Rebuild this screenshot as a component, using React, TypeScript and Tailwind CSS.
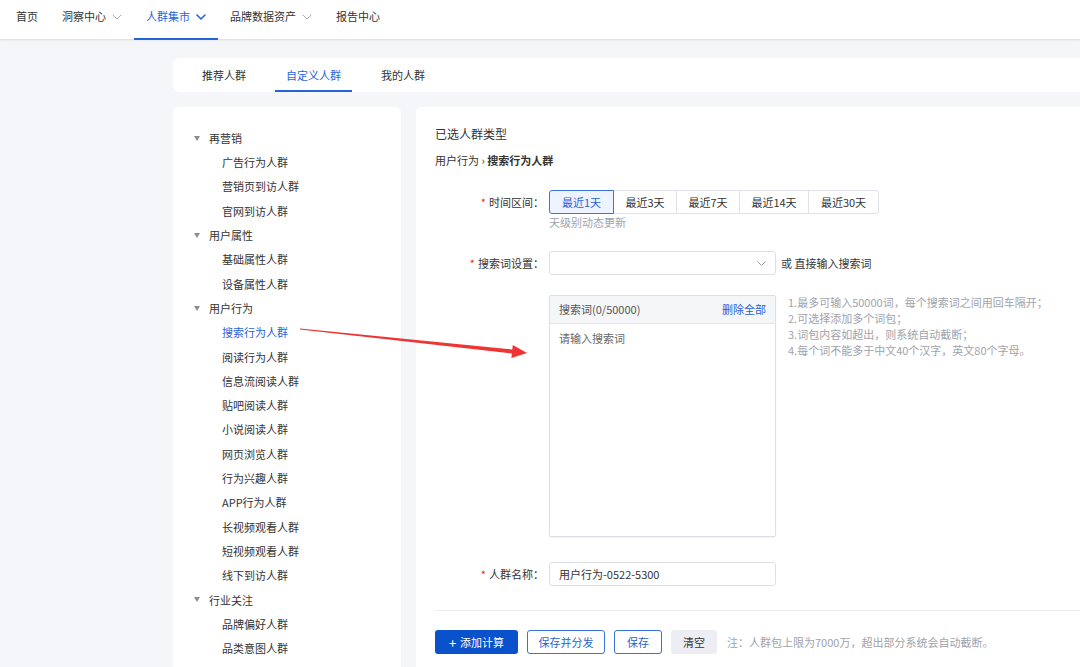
import React from 'react';

const navItems = [
  { label: '首页' },
  { label: '洞察中心', caret: true },
  { label: '人群集市', caret: true, active: true },
  { label: '品牌数据资产', caret: true },
  { label: '报告中心' },
];

const tabs = [
  { label: '推荐人群' },
  { label: '自定义人群', active: true },
  { label: '我的人群' },
];

const tree = [
  { group: '再营销', items: ['广告行为人群', '营销页到访人群', '官网到访人群'] },
  { group: '用户属性', items: ['基础属性人群', '设备属性人群'] },
  {
    group: '用户行为',
    items: [
      '搜索行为人群',
      '阅读行为人群',
      '信息流阅读人群',
      '贴吧阅读人群',
      '小说阅读人群',
      '网页浏览人群',
      '行为兴趣人群',
      'APP行为人群',
      '长视频观看人群',
      '短视频观看人群',
      '线下到访人群',
    ],
  },
  { group: '行业关注', items: ['品牌偏好人群', '品类意图人群'] },
];

const ranges = [
  { label: '最近1天', w: 'w-[65px]' },
  { label: '最近3天', w: 'w-[64px]' },
  { label: '最近7天', w: 'w-[64px]' },
  { label: '最近14天', w: 'w-[70px]' },
  { label: '最近30天', w: 'w-[71px]' },
];

const hints = [
  '1.最多可输入50000词，每个搜索词之间用回车隔开；',
  '2.可选择添加多个词包；',
  '3.词包内容如超出，则系统自动截断；',
  '4.每个词不能多于中文40个汉字，英文80个字母。',
];

const Chevron = ({ active = false }: { active?: boolean }) => (
  <svg width="10" height="6" viewBox="0 0 10 6" className="ml-[6px]">
    <path
      d="M1 1l4 4 4-4"
      fill="none"
      stroke={active ? '#2a62d8' : '#a8abb3'}
      strokeWidth={active ? 1.6 : 1}
      strokeLinecap="round"
      strokeLinejoin="round"
    />
  </svg>
);

// label column of the form, right aligned
const FieldLabel = ({ text }: { text: string }) => (
  <div className="w-[114px] pr-[5px] shrink-0 text-right text-[11px] leading-[16px] text-[#333]">
    <span className="text-[#f5222d] mr-[3px]">*</span>
    {text}：
  </div>
);

export default function App() {
  return (
    <div className="relative min-h-screen bg-[#f5f6fa] font-['Noto_Sans_CJK_SC','Noto_Sans',sans-serif] text-[#333] overflow-hidden">
      {/* top nav */}
      <div className="h-[40px] bg-white border-b border-[#e1e3ea] shadow-[0_1px_2px_rgba(0,0,0,0.05)] flex pl-[4px]">
        {navItems.map((n) => (
          <div
            key={n.label}
            className={`relative h-full flex items-center px-3 pb-[6px] text-[11px] ${n.active ? 'text-[#2a62d8]' : 'text-[#333]'}`}
          >
            {n.label}
            {n.caret && <Chevron active={n.active} />}
            {n.active && <div className="absolute left-0 right-0 bottom-[-1px] h-[2px] bg-[#2464d6]" />}
          </div>
        ))}
      </div>

      <div className="pl-[173px] pt-[18px]">
        {/* tabs */}
        <div className="h-[34px] bg-white rounded-l-[6px] flex pl-[18px] gap-[18px]">
          {tabs.map((t) => (
            <div
              key={t.label}
              className={`relative h-full flex items-center px-[11px] text-[11px] ${t.active ? 'text-[#2a62d8]' : 'text-[#333]'}`}
            >
              {t.label}
              {t.active && <div className="absolute left-0 right-0 bottom-0 h-[2px] bg-[#2464d6]" />}
            </div>
          ))}
        </div>

        <div className="flex gap-[15px] mt-[15px]">
          {/* left tree */}
          <div className="w-[228px] shrink-0 bg-white rounded-[6px] pt-[19px] pb-[20px] h-[600px]">
            {tree.map((g) => (
              <div key={g.group}>
                <div className="h-[24.3px] flex items-center pl-[21px] text-[11px]">
                  <div className="w-0 h-0 border-l-[3.5px] border-r-[3.5px] border-t-[5px] border-l-transparent border-r-transparent border-t-[#8a8d94]" />
                  <span className="ml-[9px]">{g.group}</span>
                </div>
                {g.items.map((it) => (
                  <div
                    key={it}
                    className={`h-[24.3px] flex items-center pl-[49px] text-[11px] ${it === '搜索行为人群' ? 'text-[#2a62d8]' : 'text-[#333]'}`}
                  >
                    {it}
                  </div>
                ))}
              </div>
            ))}
          </div>

          {/* right form */}
          <div className="flex-1 bg-white rounded-l-[6px] pt-[19px] pl-[19px] h-[600px]">
            <div className="text-[12px] leading-[16px] text-[#333]">已选人群类型</div>
            <div className="mt-[10px] text-[11px] leading-[16px] text-[#333]">
              用户行为 › <span className="font-bold">搜索行为人群</span>
            </div>

            <div className="mt-[22px] flex items-center">
              <FieldLabel text="时间区间" />
              <div className="flex">
                {ranges.map((r, i) => (
                  <div
                    key={r.label}
                    className={`${r.w} h-[24px] flex items-center justify-center text-[11px] border ${i > 0 ? '-ml-px' : ''} ${i === 0 ? 'rounded-l-[3px] border-[#3b74e0] bg-[#eef4ff] text-[#2a62d8] relative z-10' : 'border-[#dfe2e8] text-[#333]'} ${i === ranges.length - 1 ? 'rounded-r-[3px]' : ''}`}
                  >
                    {r.label}
                  </div>
                ))}
              </div>
            </div>
            <div className="mt-[1px] pl-[114px] text-[11px] leading-[14px] text-[#a0a3aa]">天级别动态更新</div>

            <div className="mt-[22px] flex items-center">
              <FieldLabel text="搜索词设置" />
              <div className="w-[227px] h-[24px] border border-[#dcdfe6] rounded-[3px] flex items-center justify-end pr-[9px]">
                <svg width="9" height="5" viewBox="0 0 9 5">
                  <path d="M0.5 0.5l4 4 4-4" fill="none" stroke="#9a9da5" strokeWidth="1" />
                </svg>
              </div>
              <span className="ml-[5px] text-[11px] text-[#333]">或 直接输入搜索词</span>
            </div>

            <div className="mt-[20px] flex">
              <div className="w-[114px] shrink-0" />
              <div className="w-[227px] h-[242px] border border-[#dcdfe6] rounded-[2px] shadow-[0_1px_2px_rgba(0,0,0,0.06)] flex flex-col">
                <div className="h-[28px] bg-[#f5f6f8] border-b border-[#e3e5ea] flex items-center justify-between px-[9px] text-[11px]">
                  <span className="text-[#555]">搜索词(0/50000)</span>
                  <span className="text-[#2a62d8]">删除全部</span>
                </div>
                <div className="px-[9px] pt-[6px] text-[11px] leading-[16px] text-[#666]">请输入搜索词</div>
              </div>
              <div className="ml-[12px] -mt-[1px] text-[11px] leading-[16px] text-[#a0a3aa]">
                {hints.map((h) => (
                  <div key={h}>{h}</div>
                ))}
              </div>
            </div>

            <div className="mt-[25px] flex items-center">
              <FieldLabel text="人群名称" />
              <div className="w-[227px] h-[24px] border border-[#dcdfe6] rounded-[3px] flex items-center px-[9px] text-[11px] text-[#333]">
                用户行为-0522-5300
              </div>
            </div>

            <div className="mt-[24px] border-t border-[#eceef2]" />

            <div className="mt-[19px] flex items-center gap-[9px]">
              <div className="w-[83px] h-[24px] rounded-[3px] bg-[#0a52cc] text-white text-[11px] flex items-center justify-center">
                <span className="text-[13px] mr-[4px] leading-none">+</span>添加计算
              </div>
              <div className="w-[78px] h-[24px] rounded-[3px] border border-[#3a72dc] text-[#2b5fd0] text-[11px] flex items-center justify-center">
                保存并分发
              </div>
              <div className="w-[48px] h-[24px] rounded-[3px] border border-[#3a72dc] text-[#2b5fd0] text-[11px] flex items-center justify-center">
                保存
              </div>
              <div className="w-[46px] h-[24px] rounded-[3px] bg-[#eceef3] text-[#333] text-[11px] flex items-center justify-center">
                清空
              </div>
              <span className="ml-[1px] text-[11px] text-[#a0a3aa]">注：人群包上限为7000万，超出部分系统会自动截断。</span>
            </div>
          </div>
        </div>
      </div>

      {/* red annotation arrow */}
      <svg className="absolute left-0 top-0 pointer-events-none" width="1080" height="667" viewBox="0 0 1080 667">
        <polygon
          points="300,328.6 512.3,349.4 512.8,344.9 527,353 511.4,357.9 511.9,353.4 300,329.6"
          fill="#ef3434"
        />
      </svg>
    </div>
  );
}
